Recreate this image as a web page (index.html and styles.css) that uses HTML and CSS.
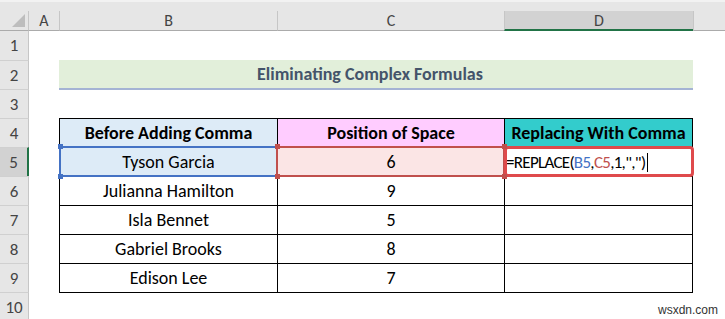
FILE: index.html
```html
<!DOCTYPE html>
<html>
<head>
<meta charset="utf-8">
<link rel="stylesheet" href="styles.css">
</head>
<body>
<div class="top"></div>
<div class="colheads">
  <div class="ch corner"><span class="tri"></span></div>
  <div class="ch col-a">A</div>
  <div class="ch col-b">B</div>
  <div class="ch col-c">C</div>
  <div class="ch col-d sel">D</div>
  <div class="ch col-e"></div>
</div>
<div class="body">
  <div class="rowheads">
    <div class="rh first">1</div>
    <div class="rh">2</div>
    <div class="rh">3</div>
    <div class="rh">4</div>
    <div class="rh sel">5</div>
    <div class="rh">6</div>
    <div class="rh">7</div>
    <div class="rh">8</div>
    <div class="rh">9</div>
    <div class="rh">10</div>
  </div>
  <div class="main">
    <div class="spacer"></div>
    <div class="title">Eliminating Complex Formulas</div>
    <div class="spacer short"></div>
    <div class="tbl">
      <div class="td th th-b">Before Adding Comma</div>
      <div class="td th th-c">Position of Space</div>
      <div class="td th th-d">Replacing With Comma</div>

      <div class="td sel-b">Tyson Garcia<span class="h h-tl"></span><span class="h h-bl"></span></div>
      <div class="td sel-c">6<span class="h h-tl"></span><span class="h h-bl"></span><span class="h h-tr"></span><span class="h h-br"></span></div>
      <div class="td edit"><span class="formula">=REPLACE(<span class="ref-b">B5</span>,<span class="ref-c">C5</span>,1,",")</span><span class="cursor"></span></div>

      <div class="td">Julianna Hamilton</div>
      <div class="td">9</div>
      <div class="td"></div>

      <div class="td">Isla Bennet</div>
      <div class="td">5</div>
      <div class="td"></div>

      <div class="td">Gabriel Brooks</div>
      <div class="td">8</div>
      <div class="td"></div>

      <div class="td">Edison Lee</div>
      <div class="td">7</div>
      <div class="td"></div>
    </div>
  </div>
</div>
<div class="watermark">wsxdn.com</div>
</body>
</html>
```

FILE: styles.css
```css
html, body {
  margin: 0;
  padding: 0;
}
body {
  width: 725px;
  height: 319px;
  overflow: hidden;
  position: relative;
  background: #fff;
  font-family: Carlito, Lato, "Liberation Sans", sans-serif;
}
.top {
  height: 11px;
  box-sizing: border-box;
  background: #e6e6e6;
  border-top: 2px solid #f2f2f2;
}
.colheads {
  display: flex;
  height: 20px;
  background: #e6e6e6;
}
.ch {
  height: 20px;
  box-sizing: border-box;
  display: flex;
  align-items: center;
  justify-content: center;
  color: #444;
  font-size: 16px;
  border-bottom: 1px solid #ababab;
  border-left: 1px solid #c6c6c6;
}
.corner {
  width: 29px;
  border-left: none;
  border-right: 1px solid #c6c6c6;
  position: relative;
}
.tri {
  position: absolute;
  right: 3px;
  bottom: 3px;
  width: 0;
  height: 0;
  border-left: 13px solid transparent;
  border-bottom: 13px solid #bdbdbd;
}
.col-a { width: 30px; border-left: none; }
.col-b { width: 218px; }
.col-c { width: 227px; }
.col-d { width: 189px; }
.col-e { flex: 1; }
.ch.sel {
  background: #d2d2d2;
  border-bottom: 2px solid #217346;
}
.body {
  display: flex;
}
.rowheads {
  width: 29px;
  display: flex;
  flex-direction: column;
}
.rh {
  height: 29px;
  box-sizing: border-box;
  background: #e6e6e6;
  border-top: 1px solid #d0d0d0;
  border-right: 1px solid #c6c6c6;
  display: flex;
  align-items: center;
  justify-content: center;
  color: #444;
  font-size: 17px;
}
.rh.first { border-top: none; }
.rh.sel {
  background: #d2d2d2;
  border-right: 2px solid #217346;
}
.main {
  padding-left: 30px;
  display: flex;
  flex-direction: column;
}
.spacer { height: 29px; }
.spacer.short { height: 28px; }
.title {
  width: 634px;
  height: 30px;
  box-sizing: border-box;
  padding-right: 12px;
  background: #e2efda;
  border-bottom: 2px solid #a4b3d4;
  display: flex;
  align-items: center;
  justify-content: center;
  color: #44546a;
  font-weight: bold;
  font-size: 18px;
}
.tbl {
  display: grid;
  grid-template-columns: 218px 227px 188px;
  width: 634px;
  box-sizing: border-box;
  border-top: 1px solid #000;
  border-left: 1px solid #000;
}
.td {
  height: 29px;
  box-sizing: border-box;
  border-right: 1px solid #000;
  border-bottom: 1px solid #000;
  display: flex;
  align-items: center;
  justify-content: center;
  font-size: 18px;
  color: #000;
  position: relative;
}
.th { font-weight: bold; }
.th-b { background: #ddebf7; }
.th-c { background: #ffccff; }
.th-d { background: #33cccc; }
.sel-b { background: #ddebf7; }
.sel-c { background: #fbe5e5; }
.sel-b::after,
.sel-c::after {
  content: "";
  position: absolute;
  left: -1px;
  right: -1px;
  top: -2px;
  bottom: -1px;
  border: 2px solid #4472c4;
  pointer-events: none;
}
.sel-c::after {
  left: -2px;
  border-color: #c0504d;
}
.h {
  position: absolute;
  width: 5px;
  height: 5px;
  background: #4472c4;
  z-index: 2;
}
.sel-c .h { background: #c0504d; }
.h-tl { left: -3px; top: -4px; }
.h-bl { left: -3px; bottom: -3px; }
.h-tr { right: -3px; top: -4px; }
.h-br { right: -3px; bottom: -3px; }
.sel-b .h-tl, .sel-b .h-bl { left: -2px; }
.edit {
  justify-content: flex-start;
  padding-left: 1px;
  font-size: 17px;
  letter-spacing: -0.7px;
}
.edit::after {
  content: "";
  position: absolute;
  left: -1px;
  right: -2px;
  top: -2px;
  bottom: -1px;
  border: 3px solid #df4a4c;
  border-radius: 4px;
  pointer-events: none;
}
.formula { color: #000; }
.ref-b { color: #4472c4; }
.ref-c { color: #c0504d; }
.cursor {
  display: inline-block;
  width: 0;
  height: 19px;
  border-left: 1px solid #000;
  margin-left: 2px;
}
.watermark {
  position: absolute;
  right: 7px;
  bottom: 2px;
  font-family: "Liberation Sans", Arial, sans-serif;
  font-size: 12px;
  color: #333;
}
```
